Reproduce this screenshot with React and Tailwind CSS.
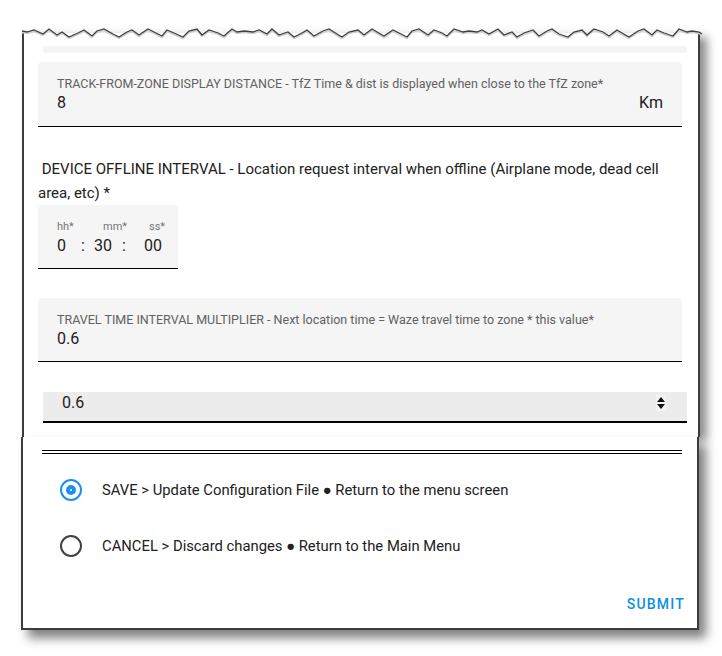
import React from "react";

const tornPoints = (dy = 0) => {
  // jagged torn-paper edge across the top of the panel
  const pts = [];
  const ys = [2, 3, 1, 5, 0, 6, 3, 8, 4, 1, 7, 2, 0, 5, 8, 3, 1, 6, 0, 3, 7, 1, 4, 8, 2, 0, 6, 1, 4, 7, 0, 3];
  let x = 0;
  let i = 0;
  while (x <= 680) {
    pts.push(`${x},${ys[i % ys.length] + 2 + dy}`);
    x += 5 + ((i * 7) % 5);
    i++;
  }
  pts.push(`680,${7 + dy}`);
  return pts.join(" ");
};

function Radio({ checked }) {
  return (
    <svg width="24" height="24" viewBox="0 0 24 24">
      <circle cx="12" cy="12" r="10" fill="none" stroke={checked ? "#1e8ff0" : "#424242"} strokeWidth="2" />
      {checked && <circle cx="12" cy="12" r="5" fill="#1e8ff0" />}
      {checked && <circle cx="12" cy="12" r="1" fill="#ffffff" />}
    </svg>
  );
}

export default function App() {
  return (
    <div className="w-[722px] h-[656px] bg-white pt-[33px] font-['Roboto',sans-serif] text-[#212121] overflow-hidden">
      {/* upper part of the dialog */}
      <div className="flow-root ml-[22px] w-[678px] h-[404px] border-x-2 border-[#3c3c3c] shadow-[7px_4px_9px_rgba(0,0,0,0.45)] bg-white">
        <svg width="680" height="12" className="-ml-[2px] -mt-[6px] block overflow-visible">
          <polyline points={tornPoints(1.5)} fill="none" stroke="#cfcfcf" strokeWidth="1.5" />
          <polyline points={tornPoints()} fill="none" stroke="#3f3f3f" strokeWidth="1.3" />
        </svg>
        <div className="ml-[19px] w-[644px] h-[7px] mt-[7px] bg-[#f5f5f5] rounded-b"></div>

        <div className="ml-[14px] w-[644px] h-[65px] mt-[9px] bg-[#f5f5f5] rounded-t border-b border-black px-[19px] pt-[15px]">
          <div className="text-[12.5px] leading-[14px] text-[#616161] whitespace-nowrap">
            TRACK-FROM-ZONE DISPLAY DISTANCE - TfZ Time &amp; dist is displayed when close to the TfZ zone*
          </div>
          <div className="flex justify-between text-[16px] leading-[22px] mt-[1px]">
            <span>8</span>
            <span>Km</span>
          </div>
        </div>

        <div className="ml-[14px] w-[622px] mt-[30px] text-[15px] leading-[24px]">
          &nbsp;DEVICE OFFLINE INTERVAL - Location request interval when offline (Airplane mode, dead cell area, etc) *
        </div>

        <div className="ml-[14px] w-[140px] h-[64px] bg-[#f5f5f5] rounded-t border-b border-black pl-[19px] pt-[15px]">
          <div className="flex text-[11px] leading-[14px] text-[#757575]">
            <span className="w-[46px]">hh*</span>
            <span className="w-[46px]">mm*</span>
            <span>ss*</span>
          </div>
          <div className="flex text-[16px] leading-[22px] mt-[1px]">
            <span className="w-[24px]">0</span>
            <span className="w-[13px]">:</span>
            <span className="w-[28px]">30</span>
            <span className="w-[22px]">:</span>
            <span>00</span>
          </div>
        </div>

        <div className="ml-[14px] w-[644px] h-[64px] mt-[29px] bg-[#f5f5f5] rounded-t border-b border-black px-[19px] pt-[15px]">
          <div className="text-[12.5px] leading-[14px] text-[#616161] whitespace-nowrap">
            TRAVEL TIME INTERVAL MULTIPLIER - Next location time = Waze travel time to zone * this value*
          </div>
          <div className="text-[16px] leading-[22px] mt-[1px]">0.6</div>
        </div>

        <div className="ml-[19px] w-[644px] h-[31px] mt-[30px] bg-[#ececec] border-b-2 border-black flex items-center justify-between pl-[19px] pr-[21px]">
          <span className="text-[16px] leading-[22px] -mt-[8px]">0.6</span>
          <svg width="10" height="16" viewBox="0 0 10 16" className="-mt-[8px]">
            <rect x="0" y="0" width="10" height="16" fill="#f3f3f3" />
            <polygon points="5,2 9,7 1,7" fill="#111" />
            <polygon points="1,9 9,9 5,14" fill="#111" />
          </svg>
        </div>
      </div>

      {/* lower part of the dialog */}
      <div className="flow-root ml-[21px] w-[678px] h-[193px] border-x-2 border-b-2 border-[#3c3c3c] shadow-[7px_8px_10px_rgba(0,0,0,0.5)] bg-white">
        <div className="ml-[19px] w-[640px] mt-[13px]">
          <div className="h-px bg-black"></div>
          <div className="h-px mt-[2px] bg-black"></div>
        </div>

        <div className="flex items-center ml-[36px] mt-[24px] h-[24px] gap-[19px]">
          <Radio checked />
          <span className="text-[14.8px]">SAVE &gt; Update Configuration File ● Return to the menu screen</span>
        </div>
        <div className="flex items-center ml-[36px] mt-[32px] h-[24px] gap-[19px]">
          <Radio />
          <span className="text-[14.8px]">CANCEL &gt; Discard changes ● Return to the Main Menu</span>
        </div>

        <div className="flex justify-end pr-[12px] mt-[36px]">
          <span className="text-[14px] font-medium tracking-[1.2px] text-[#0a8fe8]">SUBMIT</span>
        </div>
      </div>
    </div>
  );
}
